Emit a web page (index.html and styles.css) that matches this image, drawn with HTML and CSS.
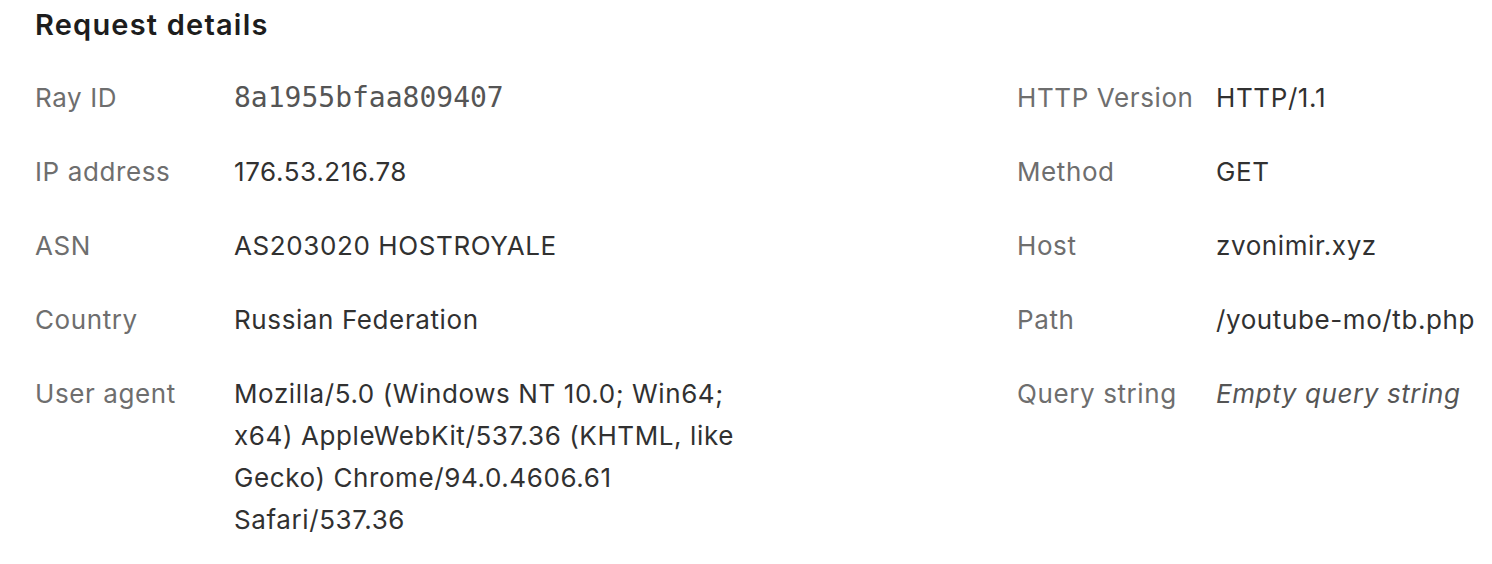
FILE: index.html
```html
<!DOCTYPE html>
<html lang="en">
<head>
<meta charset="utf-8">
<title>Request details</title>
<link rel="stylesheet" href="styles.css">
</head>
<body>
<section class="details">
  <h2 class="title">Request details</h2>
  <div class="columns">
    <dl class="col col-left">
      <div class="row"><dt>Ray ID</dt><dd class="mono">8a1955bfaa809407</dd></div>
      <div class="row"><dt>IP address</dt><dd>176.53.216.78</dd></div>
      <div class="row"><dt>ASN</dt><dd>AS203020 HOSTROYALE</dd></div>
      <div class="row"><dt>Country</dt><dd>Russian Federation</dd></div>
      <div class="row"><dt>User agent</dt><dd class="wrap">Mozilla/5.0 (Windows NT 10.0; Win64; x64) AppleWebKit/537.36 (KHTML, like Gecko) Chrome/94.0.4606.61 Safari/537.36</dd></div>
    </dl>
    <dl class="col col-right">
      <div class="row"><dt>HTTP Version</dt><dd>HTTP/1.1</dd></div>
      <div class="row"><dt>Method</dt><dd>GET</dd></div>
      <div class="row"><dt>Host</dt><dd>zvonimir.xyz</dd></div>
      <div class="row"><dt>Path</dt><dd>/youtube-mo/tb.php</dd></div>
      <div class="row"><dt>Query string</dt><dd class="empty">Empty query string</dd></div>
    </dl>
  </div>
</section>
</body>
</html>
```
FILE: styles.css
```css
html, body {
  margin: 0;
  padding: 0;
  background: #ffffff;
}
body {
  font-family: Inter, "Noto Sans", "Liberation Sans", sans-serif;
  color: #313131;
}
.details {
  padding: 4px 0 0 35px;
}
.title {
  margin: 0;
  font-size: 29px;
  line-height: 42px;
  font-weight: 600;
  letter-spacing: 1.2px;
  color: #1d1d1d;
}
.columns {
  display: grid;
  grid-template-columns: 982px 1fr;
  margin-top: 31px;
}
.col {
  margin: 0;
  display: flex;
  flex-direction: column;
  gap: 32px;
}
.row {
  display: grid;
  grid-template-columns: 199px 1fr;
  font-size: 26px;
  line-height: 42px;
  letter-spacing: 0.6px;
}
dt {
  color: #6e6e6e;
  font-weight: 400;
}
dd {
  margin: 0;
  color: #313131;
}
.wrap {
  max-width: 515px;
}
.mono {
  font-family: "DejaVu Sans Mono", "Liberation Mono", monospace;
  font-size: 28px;
  letter-spacing: 0;
  color: #555555;
}
.empty {
  font-style: italic;
  color: #555555;
}
```
